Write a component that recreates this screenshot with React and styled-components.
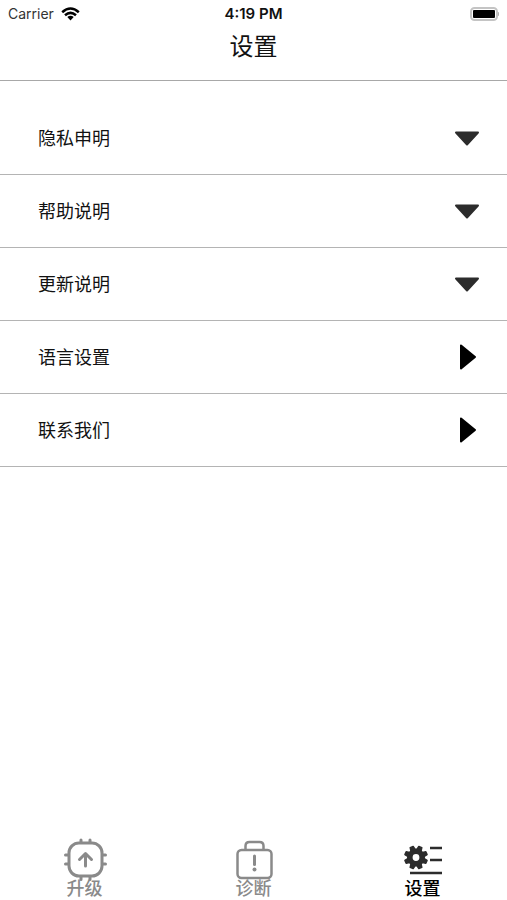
import React, { useState } from 'react';
import styled, { createGlobalStyle } from 'styled-components';

const GlobalStyle = createGlobalStyle`
  * {
    box-sizing: border-box;
  }

  body {
    margin: 0;
    background: #fff;
    color: #111;
    font-family: Inter, 'Noto Sans CJK SC', sans-serif;
  }

  button {
    font-family: inherit;
    color: inherit;
    background: none;
    border: none;
    padding: 0;
    cursor: pointer;
  }
`;

const Screen = styled.div`
  display: flex;
  flex-direction: column;
  min-height: 100vh;
`;

const StatusBar = styled.div`
  display: grid;
  grid-template-columns: 1fr auto 1fr;
  align-items: center;
  height: 27px;
  padding: 0 8px;
  font-size: 14px;
  line-height: 20px;
`;

const Carrier = styled.div`
  display: flex;
  align-items: center;
  gap: 7px;
  color: #333;
`;

const Time = styled.div`
  font-size: 15px;
  font-weight: 600;
`;

const Battery = styled.svg`
  display: block;
  justify-self: end;
`;

const Header = styled.header`
  height: 54px;
  padding-top: 4px;
  border-bottom: 1px solid #a8a8a8;
  text-align: center;
`;

const Title = styled.h1`
  margin: 0;
  font-size: 24px;
  font-weight: 400;
  line-height: 32px;
`;

const Content = styled.main`
  flex: 1;
  padding-top: 21px;
`;

const List = styled.ul`
  list-style: none;
  margin: 0;
  padding: 0;
`;

const Row = styled.button`
  display: flex;
  align-items: center;
  justify-content: space-between;
  width: 100%;
  height: 73px;
  padding: 0 26px 0 38px;
  border-bottom: 1px solid #b4b4b4;
  font-size: 18px;
  line-height: 24px;
`;

const RowLabel = styled.span`
  padding-top: 2px;
`;

const Arrow = styled.svg`
  display: block;
  width: 28px;
  height: 28px;
  fill: ${props => (props.$down ? '#2c2c2c' : '#000')};
  stroke: ${props => (props.$down ? '#2c2c2c' : '#000')};
  stroke-width: 2;
  stroke-linejoin: round;
`;

const TabBar = styled.nav`
  display: flex;
  padding-bottom: 2px;
`;

const Tab = styled.button`
  flex: 1;
  display: flex;
  flex-direction: column;
  align-items: center;
  color: ${props => (props.$active ? '#000' : '#8a8a8a')};
  font-size: 18px;
  font-weight: 500;
  line-height: 18px;
`;

const TabIcon = styled.svg`
  display: block;
  width: 48px;
  height: 44px;
  overflow: visible;
  fill: none;
  stroke: ${props => (props.$active ? '#2c2c2c' : '#8a8a8a')};
  stroke-width: 3;
  stroke-linecap: round;
  stroke-linejoin: round;
`;

const UpgradeIcon = () => (
  <>
    <rect x="8" y="7" width="33" height="33" rx="10" />
    <path d="M20 6V4M29 6V4M20 41v2.500M29 41v2.500M7 19H4.500M7 28H4.500M42 19H44.500M42 28H44.500" />
    <path d="M24.500 30V18M18.500 23.500 24.500 17.500l6 6" />
  </>
);

const DiagnoseIcon = () => (
  <>
    <rect x="7.500" y="14" width="34" height="28" rx="4" strokeWidth="2.500" />
    <path d="M15.500 13v-3q0-4 4-4h10q4 0 4 4v3" strokeWidth="2.500" />
    <path d="M24.500 20v8.500" />
    <circle cx="24.500" cy="33.500" r="2" fill="#8a8a8a" stroke="none" />
  </>
);

const SettingsIcon = () => (
  <>
    <circle cx="17" cy="21.500" r="6.200" strokeWidth="5.600" />
    {[0, 45, 90, 135, 180, 225, 270, 315].map(angle => (
      <path
        key={angle}
        d="M14.800 13.500 15.400 10.200h3.200l.6 3.300z"
        fill="#2c2c2c"
        strokeWidth="1.500"
        transform={`rotate(${angle + 22.5} 17 21.500)`}
      />
    ))}
    <path d="M31 12h12M31 24h12M11 37h32" strokeLinecap="butt" strokeWidth="2.700" />
  </>
);

const items = [
  { label: '隐私申明', expandable: true },
  { label: '帮助说明', expandable: true },
  { label: '更新说明', expandable: true },
  { label: '语言设置' },
  { label: '联系我们' },
];

const tabs = [
  { id: 'upgrade', label: '升级', Icon: UpgradeIcon },
  { id: 'diagnose', label: '诊断', Icon: DiagnoseIcon },
  { id: 'settings', label: '设置', Icon: SettingsIcon },
];

const App = () => {
  const [activeTab, setActiveTab] = useState('settings');

  return (
    <Screen lang="zh-CN">
      <GlobalStyle />
      <StatusBar>
        <Carrier>
          <span>Carrier</span>
          <svg width="19" height="14" viewBox="0 0 19 14" fill="none" stroke="#000" strokeWidth="2.500" aria-hidden="true">
            <path d="M1.200 5.200Q9.500-2.200 17.800 5.200" />
            <path d="M4 8.300Q9.500 3.500 15 8.300" />
            <path d="M6.300 10Q9.500 7.500 12.700 10L9.500 13.500z" fill="#000" stroke="none" />
          </svg>
        </Carrier>
        <Time>4:19 PM</Time>
        <Battery width="30" height="14" viewBox="0 0 30 14" aria-hidden="true">
          <rect x="2" y="1" width="26" height="12" rx="3.500" fill="#fff" stroke="#c4c4c4" strokeWidth="2" />
          <rect x="4" y="3" width="22" height="8" rx="1" fill="#000" />
          <path d="M29 5v4q2-.5 2-2t-2-2z" fill="#b0b0b0" />
        </Battery>
      </StatusBar>

      <Header>
        <Title>设置</Title>
      </Header>

      <Content>
        <List>
          {items.map(item => (
            <li key={item.label}>
              <Row type="button">
                <RowLabel>{item.label}</RowLabel>
                <Arrow viewBox="0 0 28 28" $down={item.expandable} aria-hidden="true">
                  {item.expandable ? (
                    <path d="M3 8.500h22L14 20.500z" />
                  ) : (
                    <path d="M8 2.500v23L22 14z" />
                  )}
                </Arrow>
              </Row>
            </li>
          ))}
        </List>
      </Content>

      <TabBar>
        {tabs.map(({ id, label, Icon }) => (
          <Tab
            key={id}
            type="button"
            $active={id === activeTab}
            onClick={() => setActiveTab(id)}
          >
            <TabIcon viewBox="0 0 48 44" $active={id === activeTab} aria-hidden="true">
              <Icon />
            </TabIcon>
            <span>{label}</span>
          </Tab>
        ))}
      </TabBar>
    </Screen>
  );
};

export default App;
